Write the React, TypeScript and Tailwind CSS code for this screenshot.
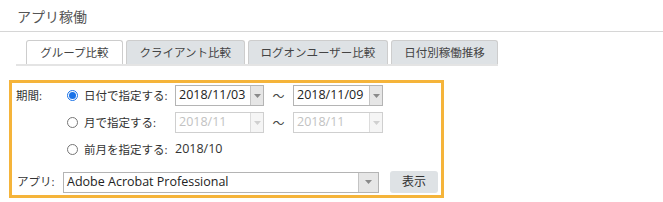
import type { ReactNode } from 'react'

const font = { fontFamily: '"Open Sans", "Noto Sans CJK JP", sans-serif' }

function Arrow({ disabled }: { disabled?: boolean }) {
  return (
    <svg width="7" height="4" viewBox="0 0 7 4">
      <path d="M0 0 L7 0 L3.5 4 Z" fill={disabled ? '#d0d0d0' : '#8a8a8a'} />
    </svg>
  )
}

function Select({ value, width, disabled, arrowWidth = 13 }: { value: string; width: string; disabled?: boolean; arrowWidth?: number }) {
  return (
    <div
      className={`flex h-[21px] border ${width} ${disabled ? 'border-[#cfcfcf] text-[#c2c2c2]' : 'border-[#b4b4b4] text-[#222]'}`}
    >
      <div className="flex-1 flex items-center pl-[3px] text-[12.5px] leading-none">{value}</div>
      <div
        className={`flex items-center justify-center border-l ${disabled ? 'border-[#dcdcdc] bg-[#f5f5f5]' : 'border-[#c4c4c4] bg-[#e6e6e6]'}`}
        style={{ width: arrowWidth }}
      >
        <Arrow disabled={disabled} />
      </div>
    </div>
  )
}

function Radio({ checked, children }: { checked?: boolean; children: ReactNode }) {
  return (
    <div className="flex items-center w-[108px] shrink-0">
      {checked ? (
        <span className="w-[11px] h-[11px] rounded-full border border-[#1a73e8] flex items-center justify-center">
          <span className="w-[7px] h-[7px] rounded-full bg-[#1a73e8]" />
        </span>
      ) : (
        <span className="w-[11px] h-[11px] rounded-full border border-[#767676] bg-white" />
      )}
      <span className="ml-[6px]">{children}</span>
    </div>
  )
}

function Tilde() {
  return (
    <span className="w-[29px] text-center text-[12px] text-[#444]" style={{ fontFamily: '"Noto Sans CJK JP", sans-serif' }}>
      〜
    </span>
  )
}

const tabs = [
  { label: 'グループ比較', w: 'w-[97px]', active: true },
  { label: 'クライアント比較', w: 'w-[119px]' },
  { label: 'ログオンユーザー比較', w: 'w-[141px]' },
  { label: '日付別稼働推移', w: 'w-[107px]' },
]

export default function App() {
  return (
    <div className="w-[663px] h-[202px] bg-white overflow-hidden text-[#333] text-[11.5px]" style={font}>
      <div className="h-[32px] border-b border-[#d6d6d6] pl-[17px] pt-[8px] text-[14px] text-[#555] leading-[18px]">
        アプリ稼働
      </div>

      <div className="ml-[16px] w-[482px] mt-[8px] pl-[10px] flex gap-[3px] border-b-[2px] border-[#e4e4e4]">
        {tabs.map((t) => (
          <div
            key={t.label}
            className={`${t.w} h-[24px] flex items-center justify-center rounded-t-[3px] border border-b-0 border-[#cdcdcd] text-[#444] ${t.active ? 'bg-white' : 'bg-[#dee2e5]'}`}
          >
            {t.label}
          </div>
        ))}
      </div>

      <div className="ml-[9px] mt-[14px] w-[435px] h-[118px] border-[3px] border-[#f5b43a] pl-[4px] pt-[2px]">
        <div className="flex">
          <div className="w-[51px] shrink-0 h-[21px] flex items-center">期間:</div>
          <div className="flex flex-col gap-[6px]">
            <div className="flex items-center h-[21px]">
              <Radio checked>日付で指定する:</Radio>
              <Select value="2018/11/03" width="w-[89px]" />
              <Tilde />
              <Select value="2018/11/09" width="w-[90px]" />
            </div>
            <div className="flex items-center h-[21px]">
              <Radio>月で指定する:</Radio>
              <Select value="2018/11" width="w-[89px]" disabled />
              <Tilde />
              <Select value="2018/11" width="w-[90px]" disabled />
            </div>
            <div className="flex items-center h-[21px]">
              <Radio>前月を指定する:</Radio>
              <span className="text-[12.5px]">2018/10</span>
            </div>
          </div>
        </div>

        <div className="flex items-center mt-[11px]">
          <div className="w-[47px] shrink-0 pl-[1px]">アプリ:</div>
          <Select value="Adobe Acrobat Professional" width="w-[316px]" arrowWidth={20} />
          <button className="ml-[11px] w-[48px] h-[22px] rounded-[3px] bg-[#dee2e5] text-[#333] text-[12px]">
            表示
          </button>
        </div>
      </div>
    </div>
  )
}
